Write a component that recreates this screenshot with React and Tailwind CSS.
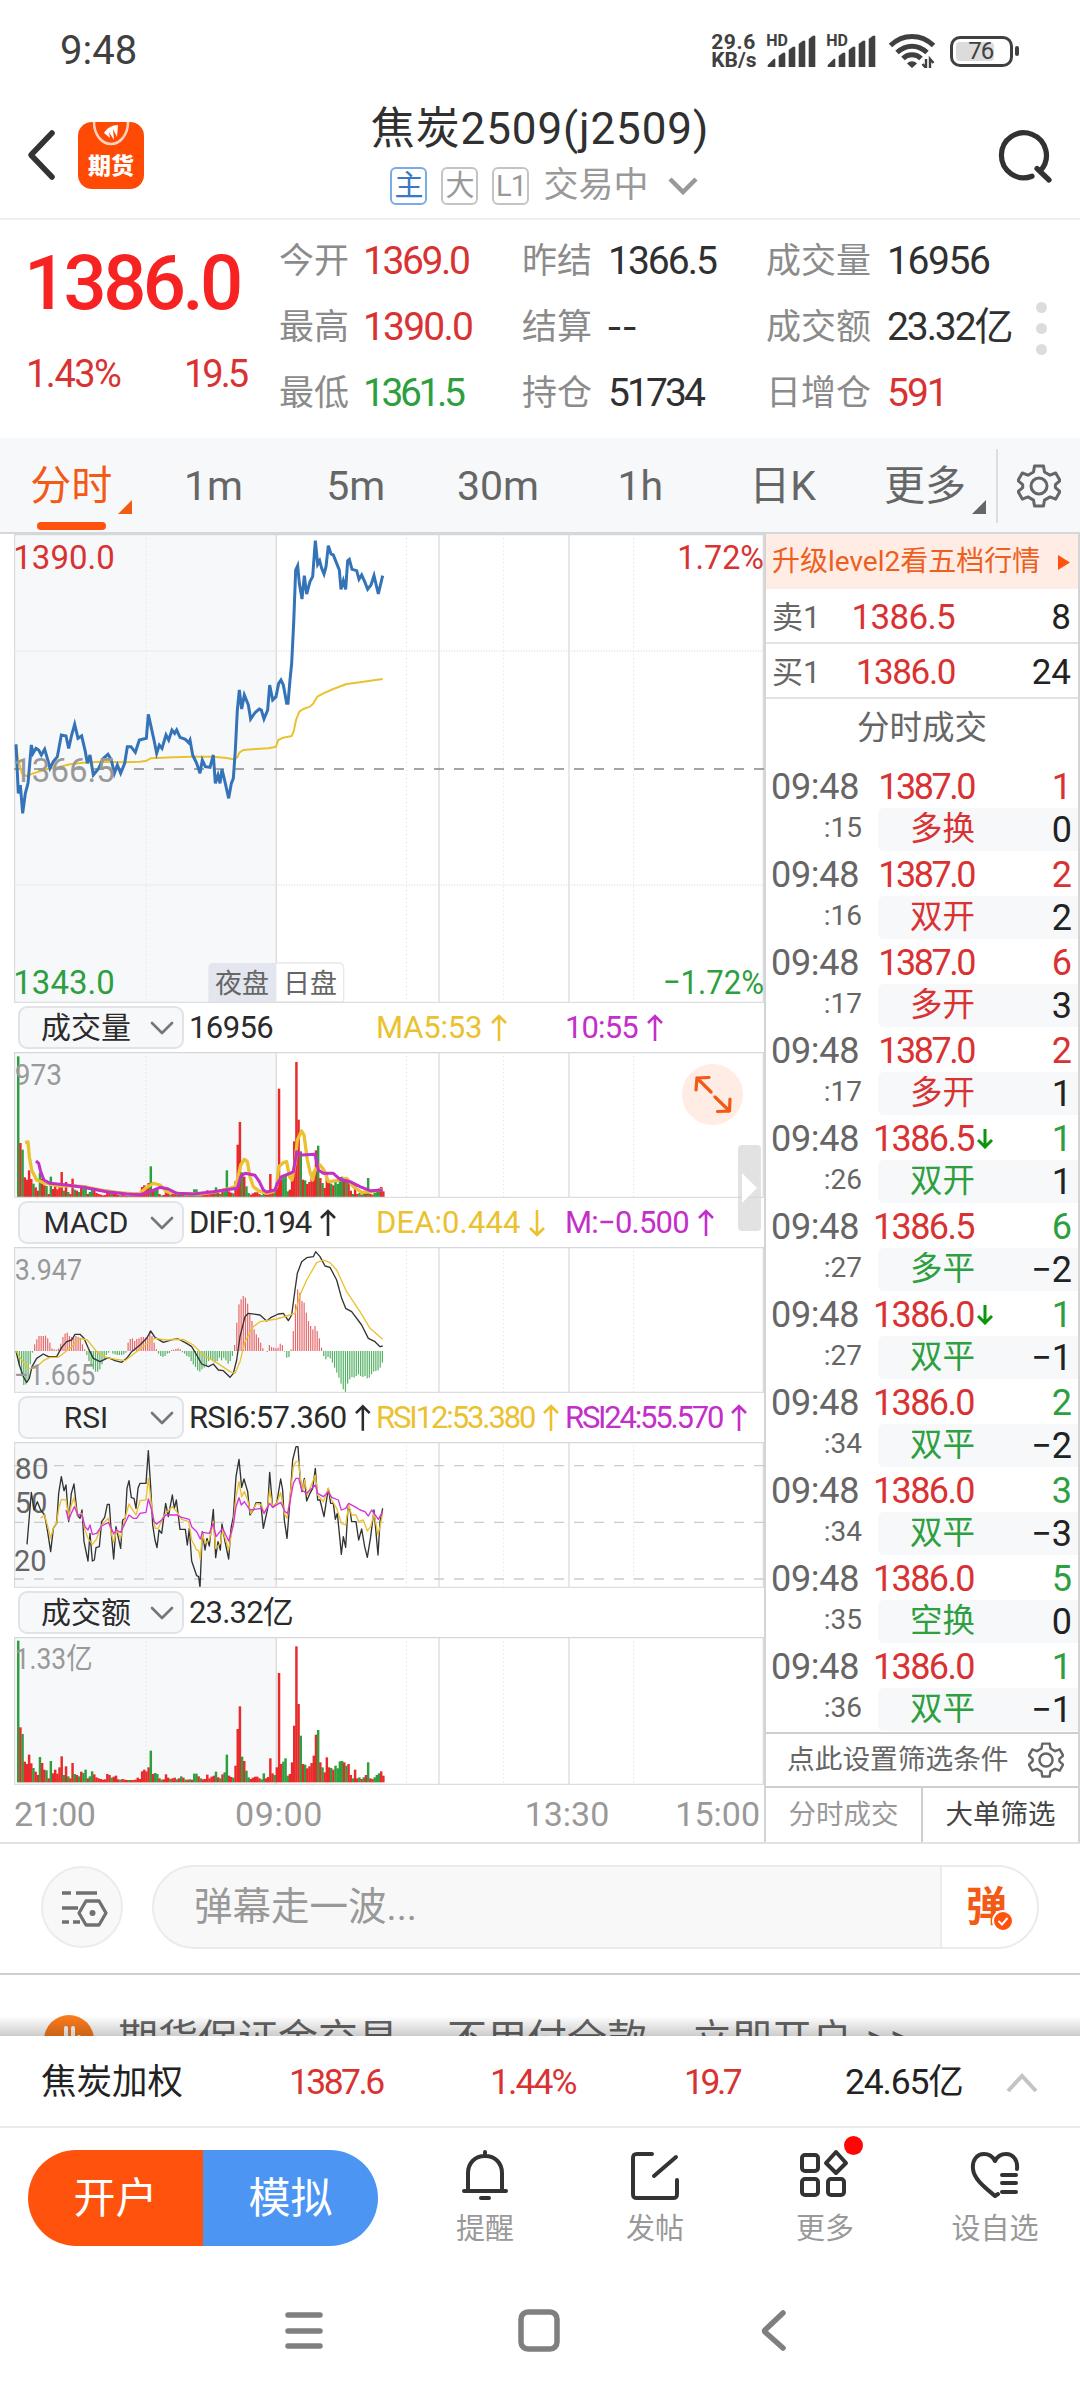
import { ChevronDown } from "lucide-react";

const RED = "#d93232";
const GREEN = "#2d9f3f";
const YELLOW = "#eac12f";
const PURPLE = "#c22fc9";

const QUOTE_COLUMNS = [
    {
        width: "w-[243px]",
        labelWidth: "w-[84px]",
        items: [
            { label: "今开", value: "1369.0", color: "text-[#d93232] tracking-[-2.4px]" },
            { label: "最高", value: "1390.0", color: "text-[#d93232] tracking-[-1.8px]" },
            { label: "最低", value: "1361.5", color: "text-[#2d9f3f] tracking-[-3.4px]" },
        ],
    },
    {
        width: "w-[244px]",
        labelWidth: "w-[86px]",
        items: [
            { label: "昨结", value: "1366.5", color: "text-[#303030] tracking-[-2px]" },
            { label: "结算", value: "--", color: "text-[#303030] tracking-[2px] scale-x-[1.2] origin-left" },
            { label: "持仓", value: "51734", color: "text-[#303030] tracking-[-2.9px]" },
        ],
    },
    {
        width: "w-[250px]",
        labelWidth: "w-[121px]",
        items: [
            { label: "成交量", value: "16956", color: "text-[#303030] tracking-[-1.4px]" },
            { label: "成交额", value: "23.32亿", color: "text-[#303030] tracking-[-2.1px]" },
            { label: "日增仓", value: "591", color: "text-[#d93232] tracking-[-2px]" },
        ],
    },
];

const TABS = ["分时", "1m", "5m", "30m", "1h", "日K", "更多"];

const TRADES = [
    { sec: ":15", price: "1387.0", qty: "1", type: "多换", change: "0", up: true },
    { sec: ":16", price: "1387.0", qty: "2", type: "双开", change: "2", up: true },
    { sec: ":17", price: "1387.0", qty: "6", type: "多开", change: "3", up: true },
    { sec: ":17", price: "1387.0", qty: "2", type: "多开", change: "1", up: true },
    { sec: ":26", price: "1386.5", qty: "1", type: "双开", change: "1", up: false, arrow: true },
    { sec: ":27", price: "1386.5", qty: "6", type: "多平", change: "−2", up: false },
    { sec: ":27", price: "1386.0", qty: "1", type: "双平", change: "−1", up: false, arrow: true },
    { sec: ":34", price: "1386.0", qty: "2", type: "双平", change: "−2", up: false },
    { sec: ":34", price: "1386.0", qty: "3", type: "双平", change: "−3", up: false },
    { sec: ":35", price: "1386.0", qty: "5", type: "空换", change: "0", up: false },
    { sec: ":36", price: "1386.0", qty: "1", type: "双平", change: "−1", up: false },
];

// one entry per minute, negative = falling minute (green)
const VOLUME = [
    -425, 165, -145, 62, 55, 83, 57, -43, 32, 22, -76, 58, 38, -36, 12, -64, 27, 38, 26, 45, 78, -22, 48, -18, 12, 58, -25, 22, -18, 32, -28, -38, 12, -18, -33, 24, 15, 12, 10, 8,
    9, 25, 22, -14, 17, 20, 9, -8, 10, 8, 7, -7, 7, 7, 8, 14, 10, 33, 38, 33, 45, -95, 25, -28, -25, 12, -8, 9, 24, 14, -10, 12, 14, -9, 12, -18, 14, -8, 8, -9, 8, -26, -26, 18,
    -12, 9, 10, 23, 12, 17, 20, -32, 15, -12, 24, -30, -83, 20, 16, -14, 50, 160, 228, -77, 64, -35, -15, 10, 14, 17, 17, 12, -9, -27, 12, 16, 72, 27, -22, 45, 328, 55, -62, -72,
    -20, 25, 60, 170, 408, 235, -140, 55, -53, 42, 48, 58, 80, 143, -157, 60, -45, 30, 75, 45, -43, 38, -50, -42, -63, -64, 60, -50, 55, 22, -12, 38, 12, -15, 10, -15, 22, -60, 12, 10,
    -15, -22, -27, 33, 20,
];

const MACD = [
    -10, -45, -75, -102, -100, -85, -40, -5, 20, 35, 45, 45, 45, 46, 38, 25, 8, 5, 4, 8, 22, 42, 52, 55, 45, 42, 40, 45, 42, 38, 20, 5, -12, -30, -45, -55, -62, -62, -55, -40, -25,
    -12, -5, 0, -8, -10, -12, -12, -12, -10, -5, 25, 36, 38, 30, 36, 38, 42, 42, 40, 42, 60, 45, 25, 5, -8, -15, -18, -15, -8, -6, 3, 4, 6, 8, 5, -4, -8, -15, -18, -30, -40, -48, -58,
    -62, -55, -50, -45, -30, -25, -30, -35, -30, -20, -28, -20, -28, -38, -30, -15, 18, 85, 140, 155, 165, 160, 142, 110, 90, 65, 50, 40, 25, 8, 0, -3, 18, 12, 10, 8, 10, 22, 18, -2,
    -20, -18, 5, 60, 140, 185, 175, 150, 145, 115, 90, 75, 65, 75, 60, 38, 10, -15, -25, -18, -22, -35, -50, -65, -80, -98, -115, -125, -98, -85, -78, -80, -75, -70, -75, -78, -75,
    -82, -80, -70, -62, -60, -58, -50, -35,
];

const PRICE_LINE =
    "48,673 55,820 61,795 68,880 76,820 84,790 94,675 99,700 108,685 116,690 124,705 134,688 142,715 150,745 160,725 172,710 184,645 198,648 206,685 215,645 224,613 234,655 245,648 256,695 262,730 270,705 280,765 296,745 310,715 324,703 334,720 343,760 352,735 362,760 374,730 382,680 393,680 406,697 418,660 439,655 445,583 462,660 470,700 478,675 486,685 498,645 506,660 516,630 524,640 530,630 540,652 556,658 566,668 570,660 578,705 590,730 600,760 607,720 616,740 630,742 640,705 646,790 654,765 660,790 666,748 676,790 686,835 694,790 700,775 706,690 712,570 718,510 725,567 733,525 745,555 752,597 765,578 778,567 784,570 792,597 803,570 809,495 818,540 828,530 836,490 843,480 850,495 860,550 864,550 870,480 875,430 881,310 887,150 893,137 898,190 906,237 913,167 920,222 930,185 938,170 946,62 953,133 959,122 965,145 972,162 978,140 985,77 993,102 1000,105 1010,130 1018,150 1023,208 1030,182 1037,208 1043,122 1048,118 1056,148 1070,152 1077,178 1085,165 1094,185 1103,208 1113,195 1122,167 1135,222 1148,167";
const AVG_LINE =
    "48,673 55,720 66,762 80,768 100,760 140,748 180,740 210,733 250,728 300,725 370,727 420,725 440,722 452,715 520,712 580,710 640,710 680,714 700,718 712,712 718,698 730,690 770,687 805,685 828,680 835,660 850,653 875,648 881,635 888,600 898,575 910,567 930,560 940,550 952,530 970,520 1000,507 1040,492 1080,487 1148,477";
const MA5_LINE =
    "75,458 84,456 88,500 95,540 110,570 130,578 150,582 180,588 210,587 250,590 300,600 350,607 400,612 420,610 440,592 460,580 480,585 500,605 540,610 600,612 650,605 690,595 705,590 712,570 722,525 733,508 742,515 750,560 760,590 775,602 800,610 820,605 830,590 836,530 850,518 860,515 868,560 876,570 885,520 892,450 905,423 912,435 922,510 930,545 938,570 945,540 960,525 972,540 985,575 1010,572 1040,565 1060,590 1085,607 1120,605 1135,600 1148,598";
const MA10_LINE =
    "108,513 116,520 122,545 132,570 150,580 200,585 250,592 320,605 380,612 420,614 450,605 480,592 505,597 530,610 580,612 640,605 690,598 712,595 722,560 735,550 765,556 778,575 790,600 800,606 825,600 832,580 845,560 870,550 880,545 890,485 905,495 945,493 955,540 970,550 1000,550 1020,568 1050,575 1080,590 1110,602 1148,600";
const DIF_LINE =
    "48,1083 58,1125 70,1160 80,1177 88,1165 96,1130 110,1105 130,1092 145,1100 170,1100 185,1072 200,1055 215,1050 225,1033 240,1033 252,1045 265,1075 280,1105 300,1115 325,1103 345,1112 365,1117 380,1105 395,1085 420,1065 440,1045 452,1023 465,1042 490,1057 520,1048 535,1047 560,1060 575,1070 590,1095 605,1122 625,1130 640,1122 655,1140 670,1142 690,1162 700,1150 710,1110 720,1040 735,980 745,970 780,975 800,993 812,983 835,972 850,970 865,992 875,975 885,900 892,850 905,815 920,803 940,800 947,785 960,800 975,828 990,832 1010,870 1025,925 1037,955 1055,965 1085,1005 1105,1045 1125,1055 1140,1070 1148,1068";
const DEA_LINE =
    "48,1083 65,1110 85,1135 105,1135 130,1112 150,1102 175,1102 210,1075 240,1045 262,1050 290,1085 320,1103 350,1108 375,1112 400,1093 440,1062 465,1045 500,1050 550,1048 580,1065 610,1095 650,1118 690,1145 705,1150 720,1115 735,1055 760,1010 780,995 830,987 860,978 885,970 900,915 920,870 950,818 970,810 990,818 1010,840 1040,905 1080,965 1110,1015 1148,1048";
const RSI6_LINE =
    "81,433 94,277 102,330 112,305 122,330 134,345 142,390 152,455 160,385 170,370 176,280 184,230 192,272 198,255 206,365 214,280 222,252 232,345 240,355 246,330 252,425 264,483 270,400 277,483 283,480 288,443 298,440 305,365 314,352 322,313 328,313 334,400 341,477 348,380 362,445 368,360 376,355 381,265 387,242 394,293 402,295 408,325 414,265 420,250 438,250 445,152 452,260 458,375 465,420 471,443 477,390 485,400 497,310 505,350 517,285 523,325 529,300 540,388 556,388 562,435 568,385 575,483 590,527 596,530 600,563 607,395 615,450 621,415 628,438 640,328 647,473 654,425 661,450 666,372 675,425 686,477 693,385 700,350 708,230 717,178 725,262 732,237 743,275 750,345 760,330 768,308 782,308 790,385 803,325 809,217 818,322 830,310 842,237 848,270 853,360 861,415 870,300 878,180 888,140 894,140 900,230 906,275 913,235 920,303 930,280 938,265 946,205 953,300 960,300 972,350 985,265 992,310 1000,310 1006,358 1012,340 1018,400 1024,463 1030,410 1037,442 1044,322 1050,330 1055,365 1068,365 1076,420 1085,387 1094,440 1102,472 1112,410 1122,330 1134,465 1140,365 1148,325";
const RSI12_LINE =
    "122,355 134,345 142,375 152,415 160,385 170,370 176,325 184,298 198,300 206,350 214,315 222,293 232,345 246,340 255,390 264,415 277,433 288,420 305,375 325,355 334,400 341,427 350,390 362,415 372,365 387,312 395,325 408,345 420,302 438,300 445,235 455,320 465,385 475,385 490,350 497,340 517,320 530,335 545,358 566,365 575,420 590,450 596,452 601,477 607,400 615,430 628,420 640,365 647,445 661,430 668,390 686,450 700,370 708,290 717,245 725,290 733,275 743,300 752,340 770,310 785,315 792,340 803,320 809,270 818,320 830,310 842,278 853,340 861,355 870,290 880,200 888,185 896,185 903,250 908,270 914,240 922,285 946,225 953,285 970,305 985,265 995,300 1010,325 1018,350 1024,370 1037,375 1046,315 1055,345 1068,345 1076,365 1090,360 1102,393 1112,380 1122,340 1134,405 1140,380 1148,340";
const RSI24_LINE =
    "198,330 206,360 214,340 223,320 234,345 246,345 255,380 264,390 270,375 277,403 290,400 305,378 325,367 334,385 341,402 348,390 362,397 375,370 387,345 400,355 410,355 420,340 438,337 445,297 455,330 462,365 470,372 485,360 497,345 517,345 530,345 545,352 568,358 575,380 590,395 601,417 607,397 628,400 640,370 648,410 668,385 686,423 700,375 708,320 717,293 724,315 733,305 750,330 785,325 792,340 809,310 818,322 842,307 855,335 863,340 870,305 880,250 888,235 896,235 905,270 920,280 946,255 953,280 970,290 985,275 995,292 1015,300 1024,330 1037,325 1046,310 1068,322 1080,330 1095,335 1105,348 1115,330 1135,358 1148,335";

function Line({ points, color, width = 4 }) {
    return <polyline points={points} fill="none" stroke={color} strokeWidth={width} strokeLinejoin="round" />;
}

function Label({ x, y, size = 87, fill = "#999", length, children }) {
    return (
        <text x={x} y={y} fontSize={size} fill={fill} textLength={length} lengthAdjust="spacingAndGlyphs">
            {children}
        </text>
    );
}

// Chart units are a third of a pixel; top is where the frame starts on that scale
function Chart({ top, height, children }) {
    const bottom = top + height * 3;
    return (
        <svg width="750" height={height} viewBox={`42 ${top} 2250 ${height * 3}`} className="block shrink-0">
            <rect x="42" y={top} width="786" height={height * 3} fill="#f7f8fa" />
            {[438, 1219, 1511, 1901].map((x) => (
                <line key={x} x1={x} x2={x} y1={top} y2={bottom} stroke="#e3e3e3" strokeWidth="3" strokeDasharray="4 8" />
            ))}
            {[43.5, 829, 1317, 1707, 2290].map((x) => (
                <line key={x} x1={x} x2={x} y1={top} y2={bottom} stroke="#dcdcde" strokeWidth="4" />
            ))}
            {children}
            <line x1="42" x2="2292" y1={top + 1.5} y2={top + 1.5} stroke="#d5d7da" strokeWidth="4" />
            <line x1="42" x2="2292" y1={bottom - 1.5} y2={bottom - 1.5} stroke="#dedede" strokeWidth="5" />
        </svg>
    );
}

function VolumeBars({ base }) {
    return VOLUME.map((v, i) => (
        <rect key={i} x={51 + 6.52 * i} y={base - Math.abs(v)} width="7.4" height={Math.abs(v)} fill={v > 0 ? "#e82a2a" : GREEN} />
    ));
}

function Arrow({ down = false }) {
    return (
        <svg width="16" height="28" viewBox="0 0 16 28" fill="none" stroke="currentColor" strokeWidth="2.6" className={"ml-[9px] " + (down ? "rotate-180" : "")}>
            <path d="M8 27V2M1 9l7-7 7 7" />
        </svg>
    );
}

function IndicatorRow({ name, height, values }) {
    return (
        <div className={"flex items-center pl-[4px] text-[31px] leading-none whitespace-nowrap " + height}>
            <div className="flex h-[43px] w-[166px] items-center justify-end rounded-[9px] border-2 border-[#e1e3e6] bg-[#f7f8fa] text-[30px] text-[#2b2b2b]">
                <span className="flex-1 pl-[10px] text-center">{name}</span>
                <ChevronDown width="40" height="40" strokeWidth="1.6" color="#777" />
            </div>
            {values.map((v) => (
                <div key={v.text} className={"ml-[5px] flex items-center " + v.className}>
                    {v.text}
                    {v.dir && <Arrow down={v.dir === "down"} />}
                </div>
            ))}
        </div>
    );
}

function Gear({ size }) {
    return (
        <svg width={size} height={size} viewBox="0 0 44 44" fill="none" stroke="#666" strokeWidth="3" strokeLinejoin="round">
            <path d="M17.5 2h9l1 6 5.500 3.200 5.700-2.200 4.300 7.600-4.600 4v3l4.600 4-4.300 7.500-5.700-2.200-5.500 3.200-1 6h-9l-1-6-5.500-3.200-5.700 2.200L1 27.600l4.700-4v-3L1 16.600 5.300 9l5.700 2.200L16.500 8z" />
            <circle cx="22" cy="22" r="8" />
        </svg>
    );
}

function Signal() {
    return (
        <div className="relative h-[32px] w-[50px]">
            <span className="absolute top-[-2px] left-0 text-[16px] leading-none font-bold">HD</span>
            <svg width="50" height="32" viewBox="0 0 50 32" fill="#404040">
                <path d="M2 32v-2l6-6h1v8zM13 32V21l4-3h2v14zM23 32V15l4-3h2v20zM33 32V9l4-3h2v26zM43 32V4l4-3h2v31z" stroke="#404040" strokeWidth=".6" strokeLinejoin="round" />
            </svg>
        </div>
    );
}

function StatusBar() {
    return (
        <div className="flex h-[100px] items-center pt-[2px] pl-[60px] text-[#404040]">
            <span className="text-[40px] leading-none">9:48</span>
            <div className="ml-[574px] flex items-center">
                <div className="w-[55px] text-[21px] leading-[18px] font-bold">
                    <div className="tracking-[0.600px]">29.6</div>
                    <div>KB/s</div>
                </div>
                <Signal />
                <div className="w-[10px]" />
                <Signal />
                <svg width="46" height="34" viewBox="0 0 46 34" fill="none" stroke="#404040" strokeWidth="5" className="ml-[13px]">
                    <path d="M1.500 11.500C14-.5 32-.5 44.500 11.500" />
                    <path d="M8 18.500c9-8.500 21-8.500 30 0" />
                    <path d="M14 24.500c5-5 13-5 18 0" />
                    <path d="M18 29.500l5 4.500 5-4.500c-3-3-7-3-10 0z" fill="#404040" stroke="none" />
                    <path d="M37 25v9l-3.500-4M41 34v-9l3.500 4" strokeWidth="2.400" />
                </svg>
                <div className="ml-[15px] flex h-[31px] w-[63px] items-center rounded-[10px] border-[3.500px] border-[#404040] p-[3px]">
                    <div className="h-full w-[38px] shrink-0 rounded-[4px] bg-[#dcdcdc]" />
                    <span className="-ml-[26px] text-[24px] leading-none tracking-[-1px]">76</span>
                </div>
                <div className="ml-[2px] h-[10px] w-[4px] rounded-full bg-[#404040]" />
            </div>
        </div>
    );
}

function Header() {
    return (
        <div className="flex h-[120px] items-start justify-between border-b-2 border-[#eeeeee]">
            <div className="flex w-[200px] items-center pt-[22px] pl-[25px]">
                <svg width="34" height="54" viewBox="0 0 34 54" fill="none" stroke="#333" strokeWidth="5.500" strokeLinecap="round" strokeLinejoin="round">
                    <path d="M27 4L6 26l21 22" />
                </svg>
                <div className="relative ml-[19px] flex h-[67px] w-[66px] items-end justify-center overflow-hidden rounded-[14px] bg-[#ff4a05] pb-[11px] text-[23px] leading-none font-black text-white">
                    <svg width="66" height="26" viewBox="0 0 66 26" className="absolute top-0 left-0" fill="none" stroke="#ffd2bd" strokeWidth="2.500">
                        <path d="M16 0c0 13 8 22 17 22S50 13 50 0" />
                        <path d="M26 11C29 6 34 3 40 3L39 15l-4-8 1 11-5-8 1 6z" fill="#fff" stroke="none" />
                    </svg>
                    期货
                </div>
            </div>
            <div className="flex flex-col items-center pt-[4px]">
                <div className="text-[44px] leading-[50px] tracking-[0.900px] text-[#303030]">焦炭2509(j2509)</div>
                <div className="mt-[10px] ml-[8px] flex items-center text-[35px] leading-[44px] text-[#999]">
                    <span className="flex h-[38px] w-[37px] items-center justify-center rounded-[6px] border-2 border-[#79abe4] text-[29px] text-[#3878c7]">主</span>
                    <span className="ml-[14px] flex h-[38px] w-[37px] items-center justify-center rounded-[6px] border-2 border-[#c4c4c4] text-[29px]">大</span>
                    <span className="ml-[14px] flex h-[38px] w-[37px] items-center justify-center rounded-[6px] border-2 border-[#c4c4c4] text-[29px] tracking-[-1px]">L1</span>
                    <span className="ml-[14px]">交易中</span>
                    <svg width="30" height="18" viewBox="0 0 30 18" fill="none" stroke="#999" strokeWidth="4.500" className="ml-[19px]">
                        <path d="M2 2l13 13L28 2" />
                    </svg>
                </div>
            </div>
            <div className="flex w-[200px] justify-end pt-[28px] pr-[25px]">
                <svg width="58" height="56" viewBox="0 0 58 56" fill="none" stroke="#303233" strokeWidth="5.200" strokeLinecap="round">
                    <path d="M35 48.300A22.500 22.500 0 1 1 43.500 42.500M40 40.500L52 52" />
                </svg>
            </div>
        </div>
    );
}

function Quote() {
    return (
        <div className="flex h-[218px]">
            <div className="w-[279px] shrink-0 pl-[24px]">
                <div className="pt-[25px] text-[76px] leading-[76px] font-medium tracking-[-3.600px] text-[#f72323]">1386.0</div>
                <div className="mt-[31px] ml-[2px] flex text-[38px] leading-[44px] text-[#d93232]">
                    <span className="w-[158px] tracking-[-1.500px]">1.43%</span>
                    <span className="tracking-[-3px]">19.5</span>
                </div>
            </div>
            {QUOTE_COLUMNS.map((col, i) => (
                <div key={i} className={"shrink-0 pt-[8px] whitespace-nowrap " + col.width}>
                    {col.items.map((item) => (
                        <div key={item.label} className="flex h-[66px] items-center">
                            <span className={"shrink-0 text-[35px] leading-none text-[#8b8b8b] " + col.labelWidth}>{item.label}</span>
                            <span className={"text-[39px] leading-none " + item.color}>{item.value}</span>
                        </div>
                    ))}
                </div>
            ))}
            <div className="flex flex-col gap-[10px] pt-[82px] pl-[20px]">
                <span className="size-[11px] rounded-full bg-[#dcdcdc]" />
                <span className="size-[11px] rounded-full bg-[#dcdcdc]" />
                <span className="size-[11px] rounded-full bg-[#dcdcdc]" />
            </div>
        </div>
    );
}

function TabBar() {
    return (
        <div className="flex h-[96px] border-b-2 border-[#d5d8db] bg-[#f7f8fa] text-[41px] text-[#666]">
            {TABS.map((tab, i) => (
                <div key={tab} className={"relative flex w-[142.300px] items-center justify-center pt-[4px] " + (i === 0 ? "text-[#f25a16]" : "")}>
                    {tab}
                    {(i === 0 || i === 6) && (
                        <svg width="14" height="14" viewBox="0 0 14 14" fill="currentColor" className="absolute right-[10px] bottom-[18px]">
                            <path d="M14 0v14H0z" />
                        </svg>
                    )}
                    {i === 0 && <span className="absolute bottom-[2px] left-[37px] h-[8px] w-[69px] rounded-full bg-[#ff520d]" />}
                </div>
            ))}
            <div className="mt-[11px] h-[74px] w-[2px] bg-[#dcdee0]" />
            <div className="flex flex-1 items-center justify-center pt-[2px]">
                <Gear size="44" />
            </div>
        </div>
    );
}

function Charts() {
    return (
        <div className="relative flex w-[764px] flex-col pl-[14px]">
            <Chart top={42} height={469}>
                {[393, 1095].map((y) => (
                    <line key={y} x1="42" x2="2292" y1={y} y2={y} stroke="#dcdcdc" strokeWidth="3" strokeDasharray="4 4" />
                ))}
                <line x1="42" x2="2292" y1="747" y2="747" stroke="#888" strokeWidth="5" strokeDasharray="30 30" />
                <Line points={AVG_LINE} color={YELLOW} width={6} />
                <polyline points={PRICE_LINE} fill="none" stroke="#3473b8" strokeWidth="9" />
                <Label x="40" y="147" size={102} fill={RED} length="304">1390.0</Label>
                <Label x="40" y="786" size={102} length="304">1366.5</Label>
                <Label x="40" y="1421" size={102} fill={GREEN} length="304">1343.0</Label>
                <Label x="2032" y="147" size={102} fill={RED} length="260">1.72%</Label>
                <Label x="1988" y="1421" size={102} fill={GREEN} length="304">−1.72%</Label>
                <path d="M829 1329H640q-15 0-15 15v102h204z" fill="#e3e6ee" />
                <path d="M829 1329h186q16 0 16 15v102H829" fill="#fff" stroke="#e8e8ea" strokeWidth="4" />
                <Label x="645" y="1420" size={81} fill="#666">夜盘</Label>
                <Label x="849" y="1420" size={81} fill="#666">日盘</Label>
            </Chart>
            <IndicatorRow
                name="成交量"
                height="h-[49px]"
                values={[
                    { text: "16956", className: "w-[182px] text-[#2b2b2b] tracking-[-0.6px]" },
                    { text: "MA5:53", className: "w-[184px] text-[#eac12f] tracking-[-0.2px]", dir: "up" },
                    { text: "10:55", className: "text-[#c22fc9] tracking-[-0.9px]", dir: "up" },
                ]}
            />
            <Chart top={186} height={146}>
                <VolumeBars base={624} />
                <Label x="44" y="285" length="142">973</Label>
                <Line points={MA5_LINE} color={YELLOW} width={10} />
                <Line points={MA10_LINE} color={PURPLE} width={9} />
            </Chart>
            <IndicatorRow
                name="MACD"
                height="h-[49px]"
                values={[
                    { text: "DIF:0.194", className: "w-[182px] text-[#2b2b2b] tracking-[-1px]", dir: "up" },
                    { text: "DEA:0.444", className: "w-[184px] text-[#eac12f] tracking-[0.1px]", dir: "down" },
                    { text: "M:−0.500", className: "text-[#c22fc9] tracking-[-0.8px]", dir: "up" },
                ]}
            />
            <Chart top={771} height={146}>
                {MACD.map((v, i) => (
                    <rect key={i} x={50 + 6.52 * i} y={v > 0 ? 1083 - v : 1083} width="3.6" height={Math.abs(v)} fill={v > 0 ? "#e8696b" : "#55b266"} />
                ))}
                <Line points={DIF_LINE} color="#333" />
                <Line points={DEA_LINE} color={YELLOW} />
                <Label x="44" y="869" length="202">3.947</Label>
                <Label x="42" y="1185" length="244">−1.665</Label>
            </Chart>
            <IndicatorRow
                name="RSI"
                height="h-[49px]"
                values={[
                    { text: "RSI6:57.360", className: "w-[182px] text-[#2b2b2b] tracking-[-0.8px]", dir: "up" },
                    { text: "RSI12:53.380", className: "w-[184px] text-[#eac12f] tracking-[-2.1px]", dir: "up" },
                    { text: "RSI24:55.570", className: "text-[#c22fc9] tracking-[-2.2px]", dir: "up" },
                ]}
            />
            <Chart top={126} height={146}>
                {[197, 367, 537].map((y) => (
                    <line key={y} x1="42" x2="2292" y1={y} y2={y} stroke="#ccc" strokeWidth="4" strokeDasharray="30 30" />
                ))}
                <Label x="44" y="238" fill="#666" length="102">80</Label>
                <Label x="44" y="340" fill="#666" length="98">50</Label>
                <Label x="42" y="512" fill="#666" length="98">20</Label>
                <Line points={RSI6_LINE} color="#333" />
                <Line points={RSI12_LINE} color={YELLOW} />
                <Line points={RSI24_LINE} color="#d631dc" />
            </Chart>
            <IndicatorRow name="成交额" height="h-[49px]" values={[{ text: "23.32亿", className: "text-[#2b2b2b] tracking-[-0.8px]" }]} />
            <Chart top={712} height={148}>
                <VolumeBars base={1148} />
                <Label x="44" y="808" length="234">1.33亿</Label>
            </Chart>
            <div className="relative flex h-[57px] items-center justify-between pr-[4px] text-[34px] leading-none text-[#999]">
                <span className="w-[221px] tracking-[-0.700px]">21:00</span>
                <span className="mr-auto tracking-[0.700px]">09:00</span>
                <span className="mr-[66px]">13:30</span>
                <span>15:00</span>
            </div>

            <div className="absolute top-[530px] left-[682px] flex size-[61px] items-center justify-center rounded-full bg-[#ffece5]">
                <svg width="38" height="38" viewBox="0 0 38 38" fill="none" stroke="#f25a16" strokeWidth="3.200" strokeLinecap="round" strokeLinejoin="round">
                    <path d="M2 14L3 2l12-.5M3 2l14 14M36 23l-.5 12-12 .5M35.500 35L21 21" />
                </svg>
            </div>
            <div className="absolute top-[611px] left-[738px] flex h-[86px] w-[23px] items-center justify-center rounded bg-[#d6d6d6]/70">
                <svg width="15" height="30" viewBox="0 0 15 30" fill="#fff">
                    <path d="M0 0l15 15L0 30z" />
                </svg>
            </div>
        </div>
    );
}

function DepthRow({ label, price, qty, priceClass }) {
    return (
        <div className="flex h-[55px] items-center border-b-2 border-[#e3e3e3] pt-[4px] pr-[7px] pl-[6px]">
            <span className="w-[60px] text-[31px] text-[#666]">{label}</span>
            <span className={"w-[123px] text-right text-[35px] text-[#d93232] " + priceClass}>{price}</span>
            <span className="flex-1 text-right text-[35px] text-[#222]">{qty}</span>
        </div>
    );
}

function TradePanel() {
    return (
        <div className="flex w-[316px] flex-col border-x-2 border-[#d4d4d4] leading-none whitespace-nowrap">
            <div className="flex h-[55px] items-center bg-[#ffece5] pt-[1px] pl-[6px] text-[28px] text-[#ee5f1d]">
                升级level2看五档行情
                <svg width="12" height="15" viewBox="0 0 12 15" fill="#ff520d" className="ml-auto mr-[8px]">
                    <path d="M0 0l12 7.500L0 15z" />
                </svg>
            </div>
            <DepthRow label="卖1" price="1386.5" qty="8" priceClass="tracking-[-0.7px]" />
            <DepthRow label="买1" price="1386.0" qty="24" priceClass="tracking-[-1.4px]" />
            <div className="flex h-[65px] items-center justify-center pb-[7px] text-[32.500px] text-[#666]">分时成交</div>
            {TRADES.map((t, i) => (
                <div key={i} className="h-[88px]">
                    <div className="flex h-[44px] items-center pt-[2px] pr-[6px] pl-[5px] text-[36px]">
                        <span className="w-[94px] tracking-[-0.300px] text-[#666]">09:48</span>
                        <span className={"w-[109px] text-right text-[#d93232] " + (t.price === "1387.0" ? "tracking-[-2.500px]" : "tracking-[-1.600px]")}>{t.price}</span>
                        {t.arrow && (
                            <svg width="16" height="20" viewBox="0 0 16 20" fill="none" stroke="#0a960a" strokeWidth="3" className="ml-[3px]">
                                <path d="M8 0v18M1 11l7 7 7-7" />
                            </svg>
                        )}
                        <span className={"flex-1 text-right " + (t.up ? "text-[#d93232]" : "text-[#2d9f3f]")}>{t.qty}</span>
                    </div>
                    <div className="flex h-[43px] items-center">
                        <span className="w-[96px] pb-[3px] text-right text-[28px] text-[#666]">{t.sec}</span>
                        <div className="ml-[16px] flex h-[43px] flex-1 items-center rounded-l-[6px] bg-[#f7f8fa] pr-[6px] pl-[32px]">
                            <span className={"text-[32.500px] " + (t.up ? "text-[#d93232]" : "text-[#2d9f3f]")}>{t.type}</span>
                            <span className="flex-1 text-right text-[36px] text-[#222]">{t.change}</span>
                        </div>
                    </div>
                </div>
            ))}
            <div className="flex h-[54px] items-center border-t-2 border-[#cfcfcf] pl-[21px] text-[27.700px] text-[#666]">
                点此设置筛选条件
                <span className="ml-[19px]">
                    <Gear size="36" />
                </span>
            </div>
            <div className="flex flex-1 border-t-2 border-[#cfcfcf] text-[27.500px]">
                <div className="flex w-[157px] items-center justify-center border-r-2 border-[#cfcfcf] text-[#999]">分时成交</div>
                <div className="flex flex-1 items-center justify-center text-[#444]">大单筛选</div>
            </div>
        </div>
    );
}

function DanmakuBar() {
    return (
        <div className="flex h-[133px] items-center border-y-2 border-t-[#e2e2e2] border-b-[#cfcfcf] pb-[3px] pl-[41px]">
            <div className="flex size-[82px] items-center justify-center rounded-full border-2 border-[#ececec] bg-[#f8f8f8]">
                <svg width="50" height="38" viewBox="0 0 50 38" fill="none" stroke="#707070" strokeWidth="3.300" className="ml-[3px] mt-[3px]">
                    <path d="M3 3h9M17 3h21M3 18h16M3 32h7M14 32h7" />
                    <path d="M27 11h13l7 12-7 12H27l-7-12z" strokeLinejoin="round" />
                    <circle cx="33.500" cy="23" r="3" fill="#707070" stroke="none" />
                </svg>
            </div>
            <div className="ml-[29px] flex h-[84px] w-[887px] overflow-hidden rounded-full border-2 border-[#ebebeb] bg-[#f8f8f8]">
                <div className="flex flex-1 items-center pl-[40px] text-[38.500px] text-[#999]">弹幕走一波...</div>
                <div className="flex w-[97px] items-center border-l-2 border-[#ebebeb] bg-white pl-[24px]">
                    <span className="relative text-[41px] leading-none font-bold text-[#f25a16]">
                        弹
                        <svg width="22" height="22" viewBox="0 0 22 22" className="absolute right-[-7px] bottom-[-4px]" fill="#ff520d" stroke="#fff" strokeWidth="2">
                            <circle cx="11" cy="11" r="10" />
                            <path d="M6.500 11l3.500 3.500 5.500-6.500" fill="none" />
                        </svg>
                    </span>
                </div>
            </div>
        </div>
    );
}

function AdStrip() {
    return (
        <div className="relative h-[61px] overflow-hidden">
            <div className="flex items-center pt-[35px] pl-[44px] text-[40px] leading-[60px] whitespace-nowrap text-[#666]">
                <svg width="50" height="50" viewBox="0 0 50 50">
                    <circle cx="25" cy="25" r="25" fill="#fb7c1d" />
                    <path d="M22 13v14M29 13v14M16 24v6M35 22v8" stroke="#fff" strokeWidth="4" strokeLinecap="round" />
                    <path d="M14 26h23v14H14z" fill="#fff" />
                </svg>
                <span className="ml-[24px] w-[329px]">期货保证金交易</span>
                <span className="w-[245px]">不用付全款</span>
                <span>立即开户</span>
                <span className="ml-[14px] tracking-[3px]">&gt;&gt;</span>
            </div>
            <div className="absolute inset-x-0 bottom-0 h-[20px] bg-gradient-to-b from-transparent to-black/20" />
        </div>
    );
}

function IndexBar() {
    return (
        <div className="flex h-[92px] items-center border-b-2 border-[#ebebeb] pt-[4px] pl-[41px] text-[35.500px] leading-none text-[#d93232]">
            <span className="w-[248px] text-[#222]">焦炭加权</span>
            <span className="w-[201px] tracking-[-2.600px]">1387.6</span>
            <span className="w-[194px] tracking-[-1.900px]">1.44%</span>
            <span className="w-[161px] tracking-[-3.500px]">19.7</span>
            <span className="w-[161px] tracking-[-1.200px] text-[#222]">24.65亿</span>
            <svg width="32" height="20" viewBox="0 0 32 20" fill="none" stroke="#c4c4c4" strokeWidth="4">
                <path d="M2 18L16 3l14 15" />
            </svg>
        </div>
    );
}

function BottomItem({ label, children }) {
    return (
        <div className="flex w-[170px] flex-col items-center text-[29px] leading-none text-[#999]">
            <svg width="54" height="54" viewBox="0 0 54 54" fill="none" stroke="#333" strokeWidth="4" strokeLinecap="round" strokeLinejoin="round">
                {children}
            </svg>
            <span className="mt-[12px]">{label}</span>
        </div>
    );
}

function BottomBar() {
    return (
        <div className="flex h-[142px] pt-[21px] pl-[28px]">
            <div className="mt-[1px] flex h-[96px] w-[352px] overflow-hidden rounded-full text-[42px] text-white">
                <div className="flex flex-1 items-center justify-center bg-[#ff520d]">开户</div>
                <div className="flex flex-1 items-center justify-center bg-[#4c95f3]">模拟</div>
            </div>
            <div className="ml-[22px] flex">
                <BottomItem label="提醒">
                    <path d="M27 3v4M10 41V24c0-10 7-17 17-17s17 7 17 17v17M6 42h42M23 49h8" />
                </BottomItem>
                <BottomItem label="发帖">
                    <path d="M24 5H9c-3 0-4 1-4 4v36c0 3 1 4 4 4h36c3 0 4-1 4-4V31M48 8L26 27" />
                </BottomItem>
                <BottomItem label="更多">
                    <rect x="4" y="6" width="16" height="16" rx="3" />
                    <rect x="4" y="30" width="16" height="16" rx="3" />
                    <rect x="30" y="30" width="16" height="16" rx="3" />
                    <path d="M38 3l10 11-10 10-10-10z" />
                </BottomItem>
                <BottomItem label="设自选">
                    <path d="M49 20C50 11 45 5 38 5c-5 0-9 3-11 7-2-4-6-7-11-7C9 5 4 11 5 20c1 11 14 20 22 27l3-2M34 26h14M34 34h14M34 43h14" />
                </BottomItem>
            </div>
        </div>
    );
}

export default function App() {
    return (
        <div className="relative flex h-[2400px] w-[1080px] flex-col overflow-hidden bg-white font-[Roboto,'Noto_Sans_CJK_SC',sans-serif]">
            <StatusBar />
            <Header />
            <Quote />
            <TabBar />
            <div className="flex h-[1308px]">
                <Charts />
                <TradePanel />
            </div>
            <DanmakuBar />
            <AdStrip />
            <IndexBar />
            <BottomBar />
            <span className="absolute top-[2136px] left-[844px] size-[19px] rounded-full bg-[#ff0505]" />
            <div className="flex h-[121px] items-center pl-[284px]">
                <svg width="504" height="44" viewBox="0 0 504 44" fill="none" stroke="#7f7f7f" strokeWidth="5.500" strokeLinecap="round" strokeLinejoin="round">
                    <path d="M4 6h32M4 22h32M4 37h32" />
                    <rect x="237" y="3" width="36" height="37" rx="7" />
                    <path d="M499 4L481 21q-1 1 0 2l18 16" />
                </svg>
            </div>
        </div>
    );
}
